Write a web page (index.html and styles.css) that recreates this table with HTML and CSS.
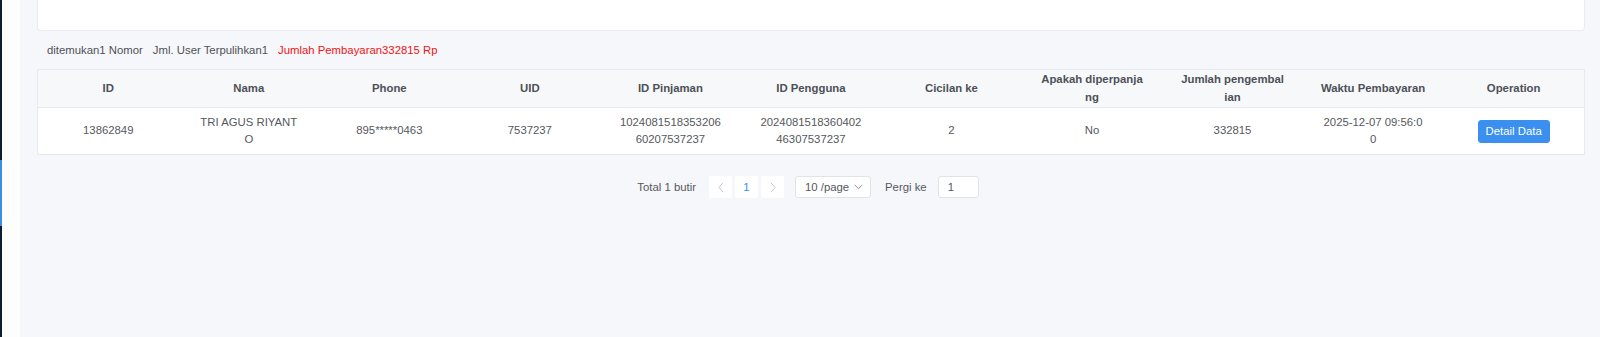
FILE: index.html
```html
<!DOCTYPE html>
<html lang="id">
<head>
<meta charset="utf-8">
<title>Pembayaran</title>
<link rel="stylesheet" href="styles.css">
</head>
<body>
<div class="app">
  <aside class="sidebar">
    <div class="rail"><span class="rail-active"></span></div>
    <div class="gutter"></div>
  </aside>
  <main class="main">
    <div class="filter-card"></div>
    <div class="summary">
      <span>ditemukan1 Nomor</span>
      <span>Jml. User Terpulihkan1</span>
      <span class="summary-red">Jumlah Pembayaran332815 Rp</span>
    </div>
    <table class="data-table">
      <thead>
        <tr>
          <th><div class="cell">ID</div></th>
          <th><div class="cell">Nama</div></th>
          <th><div class="cell">Phone</div></th>
          <th><div class="cell">UID</div></th>
          <th><div class="cell">ID Pinjaman</div></th>
          <th><div class="cell">ID Pengguna</div></th>
          <th><div class="cell">Cicilan ke</div></th>
          <th><div class="cell">Apakah diperpanjang</div></th>
          <th><div class="cell">Jumlah pengembalian</div></th>
          <th><div class="cell">Waktu Pembayaran</div></th>
          <th><div class="cell">Operation</div></th>
        </tr>
      </thead>
      <tbody>
        <tr>
          <td><div class="cell">13862849</div></td>
          <td><div class="cell">TRI AGUS RIYANTO</div></td>
          <td><div class="cell">895*****0463</div></td>
          <td><div class="cell">7537237</div></td>
          <td><div class="cell">102408151835320660207537237</div></td>
          <td><div class="cell">202408151836040246307537237</div></td>
          <td><div class="cell">2</div></td>
          <td><div class="cell">No</div></td>
          <td><div class="cell">332815</div></td>
          <td><div class="cell">2025-12-07 09:56:00</div></td>
          <td><div class="cell"><button class="btn-primary" type="button">Detail Data</button></div></td>
        </tr>
      </tbody>
    </table>
    <div class="pagination">
      <span class="pg-total">Total 1 butir</span>
      <div class="pg-pager">
        <button class="pg-btn pg-disabled" type="button">
          <svg width="8" height="11" viewBox="0 0 8 11"><path d="M6 0.8 L2 5.5 L6 10.2" fill="none" stroke="#c0c4cc" stroke-width="1"/></svg>
        </button>
        <button class="pg-btn pg-active" type="button">1</button>
        <button class="pg-btn pg-disabled" type="button">
          <svg width="8" height="11" viewBox="0 0 8 11"><path d="M2 0.8 L6 5.5 L2 10.2" fill="none" stroke="#c0c4cc" stroke-width="1"/></svg>
        </button>
      </div>
      <div class="pg-size">
        <span>10 /page</span>
        <svg width="9" height="6" viewBox="0 0 9 6"><path d="M0.8 1 L4.5 4.6 L8.2 1" fill="none" stroke="#909399" stroke-width="1"/></svg>
      </div>
      <span class="pg-jump">Pergi ke</span>
      <div class="pg-input">1</div>
    </div>
  </main>
</div>
</body>
</html>
```
FILE: styles.css
```css
* { box-sizing: border-box; }
html, body { margin: 0; padding: 0; }
body {
  font-family: "Liberation Sans", Arial, sans-serif;
  font-size: 11.35px;
  color: #606266;
  background: #f5f7fa;
  height: 337px;
  overflow: hidden;
}
.app {
  display: flex;
  height: 337px;
}
.sidebar {
  display: flex;
  flex: 0 0 20px;
}
.rail {
  width: 2px;
  background: #0e1c2d;
  padding-top: 160px;
}
.rail-active {
  display: block;
  height: 66px;
  background: #3a8ee6;
}
.gutter {
  flex: 1;
  background: #fdfdfd;
}
.main {
  flex: 1;
  min-width: 0;
  background: #f5f7fa;
  padding: 0 15px 0 17px;
}
.filter-card {
  height: 31px;
  background: #fff;
  border: 1px solid #e9ecf1;
  border-top: none;
  border-radius: 0 0 4px 4px;
}
.summary {
  height: 38px;
  display: flex;
  align-items: center;
  gap: 10px;
  padding: 0 0 1px 10px;
  color: #4f5258;
}
.summary-red { color: #f01414; }
.data-table {
  width: 1548px;
  table-layout: fixed;
  border-collapse: separate;
  border-spacing: 0;
  border: 1px solid #e6e9ef;
  background: #fff;
}
.data-table th, .data-table td {
  text-align: center;
  vertical-align: middle;
  line-height: 17.3px;
}
.data-table th {
  background: #f7f8fa;
  font-weight: bold;
  color: #4c5058;
  padding: 1.2px 0;
  border-bottom: 1px solid #e6e9ef;
  height: 38px;
}
.data-table td {
  padding: 5.2px 0;
  height: 46px;
  color: #55585e;
}
.cell {
  width: 105px;
  margin: 0 auto;
  word-break: break-all;
}
.btn-primary {
  font-family: inherit;
  font-size: 11.35px;
  line-height: 13px;
  color: #fff;
  background: #3a8fef;
  border: 1px solid #3a8fef;
  border-radius: 3px;
  padding: 4px 6px;
  height: 23px;
  width: 72px;
  white-space: nowrap;
}
.pagination {
  margin-top: 21px;
  display: flex;
  align-items: center;
  justify-content: center;
  height: 22px;
  padding-right: 6px;
  color: #55585e;
}
.pg-total { margin-right: 13px; }
.pg-pager {
  display: flex;
  gap: 3px;
  margin-right: 11px;
}
.pg-btn {
  width: 23px;
  height: 22px;
  border: none;
  border-radius: 2px;
  background: #fff;
  padding: 0;
  font-family: inherit;
  font-size: 11.35px;
  display: flex;
  align-items: center;
  justify-content: center;
}
.pg-active { color: #3a8ee6; }
.pg-size {
  width: 76px;
  height: 22px;
  border: 1px solid #dfe3ea;
  border-radius: 3px;
  background: #fff;
  display: flex;
  align-items: center;
  gap: 5px;
  padding-left: 9px;
  margin-right: 14px;
}
.pg-jump { margin-right: 11px; }
.pg-input {
  width: 41px;
  height: 22px;
  border: 1px solid #dfe3ea;
  border-radius: 3px;
  background: #fff;
  display: flex;
  align-items: center;
  padding-left: 9px;
}
```
